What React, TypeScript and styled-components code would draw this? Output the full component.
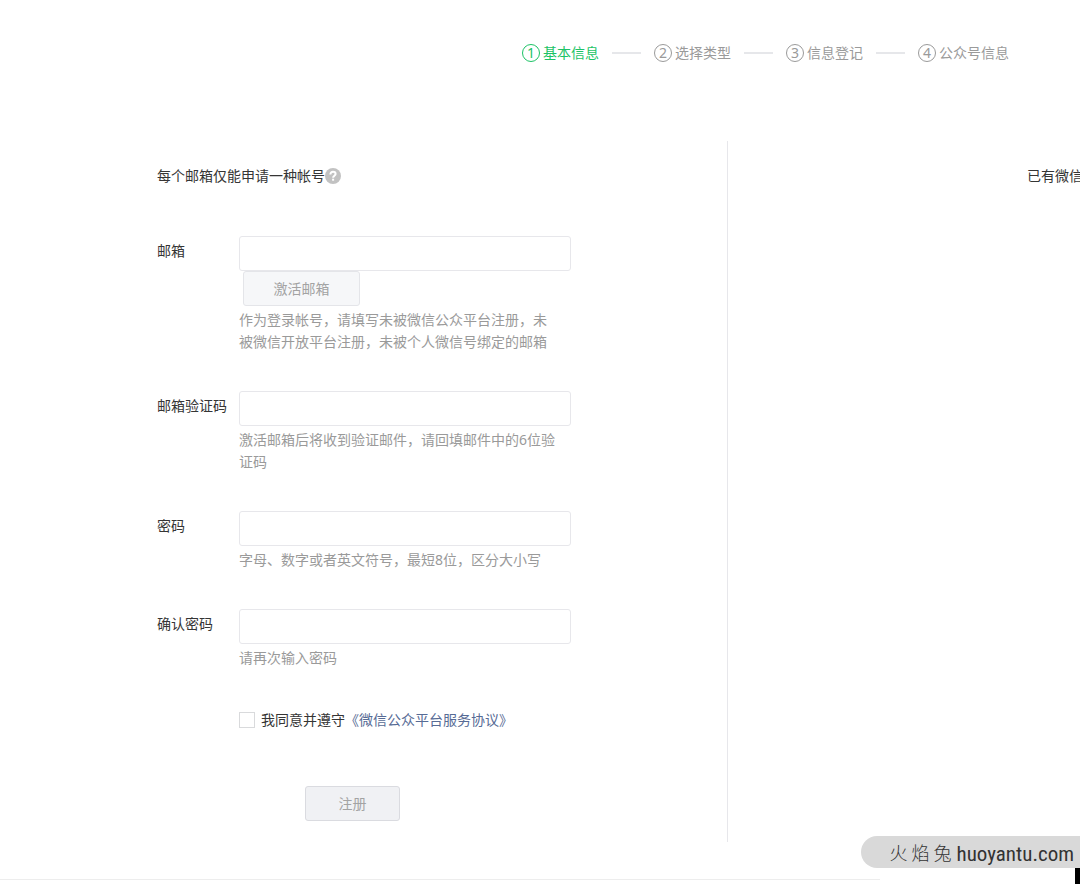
import React from 'react';
import styled, { createGlobalStyle } from 'styled-components';

const GlobalStyle = createGlobalStyle`
  *, *::before, *::after { box-sizing: border-box; }
  body {
    margin: 0;
    background: #fff;
    color: #353535;
    font-family: "Noto Sans", "Noto Sans CJK SC", sans-serif;
    font-size: 14px;
    line-height: 22px;
  }
  button, input { font: inherit; }
`;

const Page = styled.div`
  position: relative;
  min-height: 100vh;
  overflow: hidden;
`;

const Steps = styled.ol`
  display: flex;
  justify-content: flex-end;
  align-items: center;
  gap: 13px;
  margin: 0;
  padding: 42px 71px 77px 0;
  list-style: none;
`;

const Step = styled.li<{ $active?: boolean }>`
  display: flex;
  align-items: center;
  gap: 3px;
  white-space: nowrap;
  color: ${(p) => (p.$active ? '#1cc366' : '#9a9a9a')};

  &:not(:last-child)::after {
    content: "";
    width: 29px;
    height: 2px;
    margin-left: 10px;
    background: #e6e7ea;
  }
`;

const StepNumber = styled.span`
  width: 18px;
  height: 18px;
  border: 1px solid currentColor;
  border-radius: 50%;
  line-height: 16px;
  text-align: center;
`;

const Main = styled.main`
  display: flex;
  min-height: 701px;
`;

const FormColumn = styled.section`
  flex: 1;
  padding: 24px 0 20px 157px;
`;

const Aside = styled.aside`
  width: 353px;
  padding: 24px 0 0 299px;
  border-left: 1px solid #e7e7eb;
  white-space: nowrap;
`;

const Notice = styled.p`
  display: flex;
  align-items: center;
  margin: 0 0 49px;
`;

const Field = styled.div`
  display: flex;
  margin-bottom: 38px;
`;

const Label = styled.label`
  flex: none;
  width: 82px;
  padding-top: 4px;
`;

const Control = styled.div`
  width: 332px;
`;

const TextBox = styled.input`
  display: block;
  width: 100%;
  height: 35px;
  padding: 0 10px;
  border: 1px solid #e7e7eb;
  border-radius: 3px;
  background: #fff;
  outline: none;
`;

const Hint = styled.p`
  width: 320px;
  margin: 3px 0 0;
  color: #9a9a9a;
`;

const Button = styled.button<{ $primary?: boolean }>`
  display: block;
  width: ${(p) => (p.$primary ? 95 : 117)}px;
  height: 35px;
  padding: 0;
  border: 1px solid ${(p) => (p.$primary ? '#dadbe0' : '#e4e5e9')};
  border-radius: 3px;
  background: ${(p) => (p.$primary ? '#f0f1f4' : '#f6f7f9')};
  color: #a3a3a3;
`;

const ActivateRow = styled.div`
  padding-left: 4px;
`;

const Agreement = styled.div`
  display: flex;
  align-items: center;
  gap: 6px;
  padding: 2px 0 0 82px;
`;

const CheckBox = styled.input`
  appearance: none;
  width: 16px;
  height: 16px;
  margin: 0;
  border: 1px solid #d9dadc;
  background: #fff;
`;

const Link = styled.a`
  color: #576b95;
  text-decoration: none;
`;

const SubmitRow = styled.div`
  padding: 55px 0 0 148px;
`;

const Footer = styled.footer`
  margin: 37px 200px 0 0;
  border-top: 1px solid #ededed;
`;

const Watermark = styled.div`
  position: absolute;
  right: 0;
  bottom: 16px;
  display: flex;
  align-items: center;
  gap: 5px;
  height: 32px;
  padding: 4px 6px 0 28px;
  border-radius: 16px 0 0 16px;
  background: #d9d9d9;
  color: #333;
  font-family: "Roboto Condensed", "Noto Sans CJK SC", sans-serif;
  font-size: 21px;
  white-space: nowrap;
`;

const WatermarkName = styled.span`
  font-size: 18px;
  font-weight: 300;
`;

const Corner = styled.div`
  position: absolute;
  right: 0;
  bottom: 0;
  width: 5px;
  height: 16px;
  background: #000;
`;

const steps = ['基本信息', '选择类型', '信息登记', '公众号信息'];

function HelpIcon() {
  return (
    <svg width="16" height="16" viewBox="0 0 16 16" aria-hidden="true">
      <circle cx="8" cy="8" r="8" fill="#c2c2c2" />
      <path d="M5.4 6.4C5.4 4.6 6.5 3.8 8 3.8s2.6.8 2.6 2.2c0 1.6-2.5 1.8-2.5 3.7" fill="none" stroke="#fff" strokeWidth="2" />
      <rect x="7.1" y="10.7" width="2" height="2" fill="#fff" />
    </svg>
  );
}

interface FormFieldProps {
  id: string;
  label: string;
  hint: string;
  type?: string;
  children?: React.ReactNode;
}

function FormField({ id, label, hint, type = 'text', children }: FormFieldProps) {
  return (
    <Field>
      <Label htmlFor={id}>{label}</Label>
      <Control>
        <TextBox id={id} type={type} />
        {children}
        <Hint>{hint}</Hint>
      </Control>
    </Field>
  );
}

export default function App() {
  return (
    <Page lang="zh-CN">
      <GlobalStyle />
      <Steps>
        {steps.map((name, i) => (
          <Step key={name} $active={i === 0}>
            <StepNumber>{i + 1}</StepNumber>
            {name}
          </Step>
        ))}
      </Steps>
      <Main>
        <FormColumn>
          <Notice>
            每个邮箱仅能申请一种帐号
            <HelpIcon />
          </Notice>
          <form onSubmit={(e) => e.preventDefault()}>
            <FormField id="email" label="邮箱" hint="作为登录帐号，请填写未被微信公众平台注册，未被微信开放平台注册，未被个人微信号绑定的邮箱">
              <ActivateRow>
                <Button type="button">激活邮箱</Button>
              </ActivateRow>
            </FormField>
            <FormField id="code" label="邮箱验证码" hint="激活邮箱后将收到验证邮件，请回填邮件中的6位验证码" />
            <FormField id="password" type="password" label="密码" hint="字母、数字或者英文符号，最短8位，区分大小写" />
            <FormField id="confirm" type="password" label="确认密码" hint="请再次输入密码" />
            <Agreement>
              <CheckBox id="agree" type="checkbox" />
              <span>
                <label htmlFor="agree">我同意并遵守</label>
                <Link href="#agreement">《微信公众平台服务协议》</Link>
              </span>
            </Agreement>
            <SubmitRow>
              <Button type="submit" $primary>注册</Button>
            </SubmitRow>
          </form>
        </FormColumn>
        <Aside>已有微信</Aside>
      </Main>
      <Footer />
      <Watermark>
        <WatermarkName>火 焰 兔</WatermarkName>
        <span>huoyantu.com</span>
      </Watermark>
      <Corner />
    </Page>
  );
}
